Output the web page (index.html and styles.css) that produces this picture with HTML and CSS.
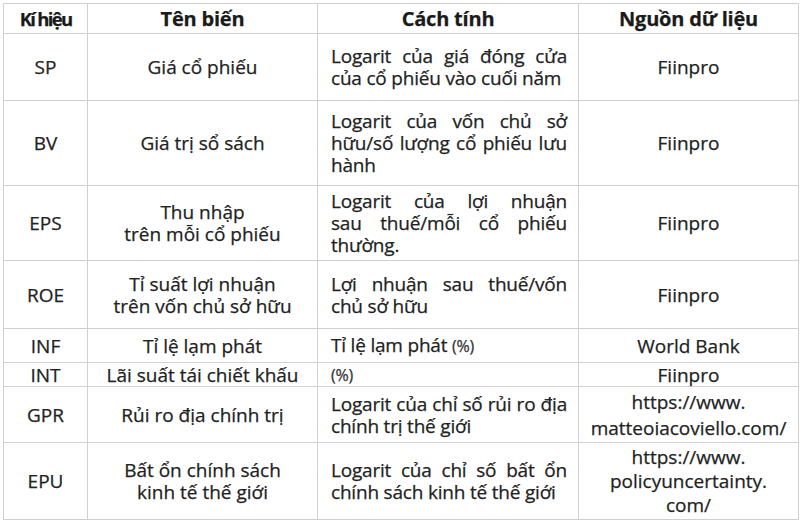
FILE: index.html
```html
<!DOCTYPE html>
<html lang="vi">
<head>
<meta charset="utf-8">
<title>Bảng biến</title>
<link rel="stylesheet" href="styles.css">
</head>
<body>
<table class="vars">
  <colgroup>
    <col class="c1"><col class="c2"><col class="c3"><col class="c4">
  </colgroup>
  <thead>
    <tr class="r-head">
      <th class="sym">Kí hiệu</th>
      <th>Tên biến</th>
      <th>Cách tính</th>
      <th>Nguồn dữ liệu</th>
    </tr>
  </thead>
  <tbody>
    <tr class="r-sp">
      <td>SP</td>
      <td>Giá cổ phiếu</td>
      <td class="calc"><span class="ln j">Logarit của giá đóng cửa</span><span class="ln">của cổ phiếu vào cuối năm</span></td>
      <td>Fiinpro</td>
    </tr>
    <tr class="r-bv">
      <td>BV</td>
      <td>Giá trị sổ sách</td>
      <td class="calc"><span class="ln j">Logarit của vốn chủ sở</span><span class="ln j">hữu/số lượng cổ phiếu lưu</span><span class="ln">hành</span></td>
      <td>Fiinpro</td>
    </tr>
    <tr class="r-eps">
      <td>EPS</td>
      <td>Thu nhập<br>trên mỗi cổ phiếu</td>
      <td class="calc"><span class="ln j">Logarit của lợi nhuận</span><span class="ln j">sau thuế/mỗi cổ phiếu</span><span class="ln">thường.</span></td>
      <td>Fiinpro</td>
    </tr>
    <tr class="r-roe">
      <td>ROE</td>
      <td>Tỉ suất lợi nhuận<br>trên vốn chủ sở hữu</td>
      <td class="calc"><span class="ln j">Lợi nhuận sau thuế/vốn</span><span class="ln">chủ sở hữu</span></td>
      <td>Fiinpro</td>
    </tr>
    <tr class="r-inf">
      <td>INF</td>
      <td>Tỉ lệ lạm phát</td>
      <td class="calc"><span class="ln">Tỉ lệ lạm phát <span class="pct">(%)</span></span></td>
      <td>World Bank</td>
    </tr>
    <tr class="r-int">
      <td>INT</td>
      <td>Lãi suất tái chiết khấu</td>
      <td class="calc"><span class="ln"><span class="pct">(%)</span></span></td>
      <td>Fiinpro</td>
    </tr>
    <tr class="r-gpr">
      <td>GPR</td>
      <td>Rủi ro địa chính trị</td>
      <td class="calc"><span class="ln j">Logarit của chỉ số rủi ro địa</span><span class="ln">chính trị thế giới</span></td>
      <td class="url-gpr">https://www.<br>matteoiacoviello.com/</td>
    </tr>
    <tr class="r-epu">
      <td>EPU</td>
      <td>Bất ổn chính sách<br>kinh tế thế giới</td>
      <td class="calc"><span class="ln j">Logarit của chỉ số bất ổn</span><span class="ln">chính sách kinh tế thế giới</span></td>
      <td class="url-epu">https://www.<br>policyuncertainty.<br>com/</td>
    </tr>
  </tbody>
</table>
</body>
</html>
```
FILE: styles.css
```css
html, body {
  margin: 0;
  padding: 0;
  background: #ffffff;
}

body {
  padding: 3px 0 0 3px;
  font-family: "Open Sans", "Noto Sans", sans-serif;
  color: #222222;
}

.vars {
  border-collapse: collapse;
  table-layout: fixed;
  width: 795px;
  font-size: 19px;
  line-height: 22px;
  -webkit-text-stroke: 0.25px #222222;
}

.c1 { width: 84px; }
.c2 { width: 230px; }
.c3 { width: 261px; }
.c4 { width: 220px; }

.vars th,
.vars td {
  border: 1px solid #d0d0d0;
  padding: 0 4px;
  text-align: center;
  vertical-align: middle;
  white-space: nowrap;
}

.vars th {
  font-weight: 700;
  font-size: 20px;
  letter-spacing: -0.2px;
  color: #1a1a1a;
}

.vars th.sym {
  font-size: 18.5px;
  letter-spacing: -1.7px;
  padding: 0 2px;
}

.vars td.calc {
  text-align: left;
  padding: 0 11px 0 13px;
  letter-spacing: -0.2px;
}

.vars td.url-gpr {
  line-height: 26px;
}

.vars td.url-epu {
  line-height: 24px;
}

.ln {
  display: block;
}

.ln.j {
  text-align: justify;
  text-align-last: justify;
}

.pct {
  font-size: 16px;
  color: #3a3a3a;
}

.r-head th { height: 29px; }
.r-sp td { height: 66px; }
.r-bv td { height: 84px; }
.r-eps td { height: 74px; }
.r-roe td { height: 67px; }
.r-inf td { height: 33px; }
.r-int td { height: 21px; }
.r-gpr td { height: 55px; }
.r-epu td { height: 76px; }
```
